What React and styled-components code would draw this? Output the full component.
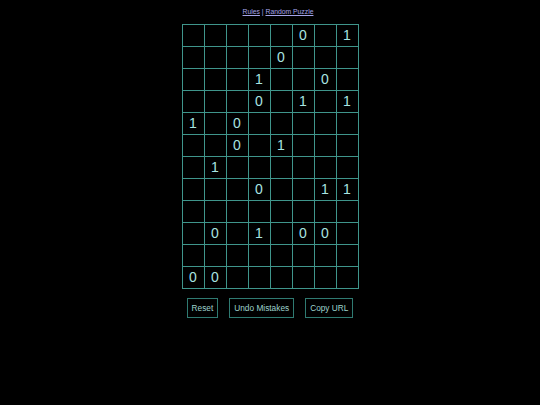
import styled, { createGlobalStyle } from "styled-components";

const GlobalStyle = createGlobalStyle`
  html, body {
    margin: 0;
    padding: 0;
    background: #000;
  }
  body {
    font-family: 'Liberation Sans', Arial, sans-serif;
  }
`;

const Page = styled.div`
  width: 540px;
  min-height: 405px;
  background: #000;
  display: flex;
  flex-direction: column;
  align-items: center;
  padding-top: 8px;
  box-sizing: border-box;
`;

const Links = styled.div`
  font-size: 6.8px;
  color: #a4a4e8;
  height: 16px;
  padding-left: 16px;
  a {
    color: #a4a4e8;
    text-decoration: underline;
  }
`;

const Board = styled.table`
  border-collapse: collapse;
  border: 1px solid #3f958b;
`;

const Cell = styled.td`
  width: 21px;
  height: 21px;
  padding: 0;
  border: 1px solid #3f958b;
  text-align: center;
  vertical-align: middle;
  color: #a8e4e2;
  font-size: 14px;
  line-height: 21px;
`;

const Controls = styled.div`
  display: flex;
  gap: 11px;
  margin-top: 9px;
`;

const Button = styled.button`
  font-family: 'Liberation Sans', Arial, sans-serif;
  font-size: 8.3px;
  color: #9ed3cd;
  background: #000;
  border: 1px solid #2f7a71;
  height: 20px;
  padding: 0 4px;
  cursor: pointer;
`;

const puzzle = [
  "     0 1",
  "    0   ",
  "   1  0 ",
  "   0 1 1",
  "1 0     ",
  "  0 1   ",
  " 1      ",
  "   0  11",
  "        ",
  " 0 1 00 ",
  "        ",
  "00      ",
];

const App = () => {
  return (
    <Page>
      <GlobalStyle />
      <Links>
        <a href="#rules">Rules</a> | <a href="#random">Random Puzzle</a>
      </Links>
      <Board>
        <tbody>
          {puzzle.map((row, r) => (
            <tr key={r}>
              {row.split("").map((ch, c) => (
                <Cell key={c}>{ch.trim()}</Cell>
              ))}
            </tr>
          ))}
        </tbody>
      </Board>
      <Controls>
        <Button>Reset</Button>
        <Button>Undo Mistakes</Button>
        <Button>Copy URL</Button>
      </Controls>
    </Page>
  );
};

export default App;
